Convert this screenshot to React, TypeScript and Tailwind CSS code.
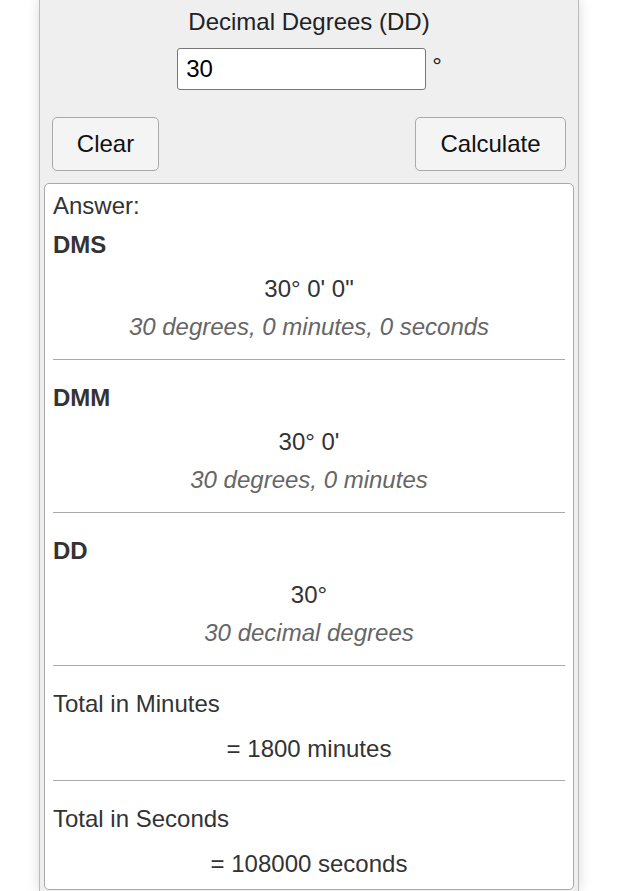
import React from "react";

function Section({ title, bold, value, note, first, last }: { title: string; bold?: boolean; value: string; note?: string; first?: boolean; last?: boolean }) {
  return (
    <div className="flex flex-col">
      <div className={`${first ? "mt-[11px]" : "mt-[24px]"} leading-[28px] ${bold ? "font-bold" : ""}`}>{title}</div>
      <div className={`${note ? "mt-[16px]" : "mt-[17px]"} text-center leading-[28px]`}>{value}</div>
      {note && <div className="mt-[10px] text-center italic leading-[28px] text-[#666]">{note}</div>}
      {!last && <div className={`${note ? "mt-[18px]" : "mt-[17px]"} h-px bg-[#aaa]`} />}
    </div>
  );
}

export default function App() {
  return (
    <div className="min-h-[891px] bg-white" style={{ fontFamily: '"Liberation Sans", Arial, sans-serif' }}>
      <div className="ml-[39px] w-[540px] min-h-[891px] border-x border-[#bbb] bg-[#efefef] shadow-[0_0_12px_rgba(0,0,0,0.15)] text-[24px]">
        <div className="pt-[8px] text-center leading-[28px] text-[#222]">Decimal Degrees (DD)</div>
        <div className="mt-[12px] flex items-start justify-center pl-[1px]">
          <input
            readOnly
            value="30"
            className="h-[42px] w-[249px] rounded-[3px] border border-[#777] bg-white px-[8px] text-[24px] text-black outline-none"
          />
          <span className="ml-[6px] mt-[4px] leading-[28px] text-[#222]">°</span>
        </div>
        <div className="mt-[27px] flex justify-between px-[12px]">
          <button className="h-[54px] w-[107px] rounded-[5px] border border-[#aaa] bg-[#f4f4f4] text-[24px] text-[#111]">Clear</button>
          <button className="h-[54px] w-[151px] rounded-[5px] border border-[#aaa] bg-[#f4f4f4] text-[24px] text-[#111]">Calculate</button>
        </div>
        <div className="mx-[4px] mt-[12px] flex flex-col rounded-[5px] border border-[#aaa] bg-white px-[8px] pt-[8px] pb-[11px] text-[#333]">
          <div className="leading-[28px]">Answer:</div>
          <Section first title="DMS" bold value={'30° 0\' 0"'} note="30 degrees, 0 minutes, 0 seconds" />
          <Section title="DMM" bold value="30° 0'" note="30 degrees, 0 minutes" />
          <Section title="DD" bold value="30°" note="30 decimal degrees" />
          <Section title="Total in Minutes" value="= 1800 minutes" />
          <Section title="Total in Seconds" value="= 108000 seconds" last />
        </div>
      </div>
    </div>
  );
}
